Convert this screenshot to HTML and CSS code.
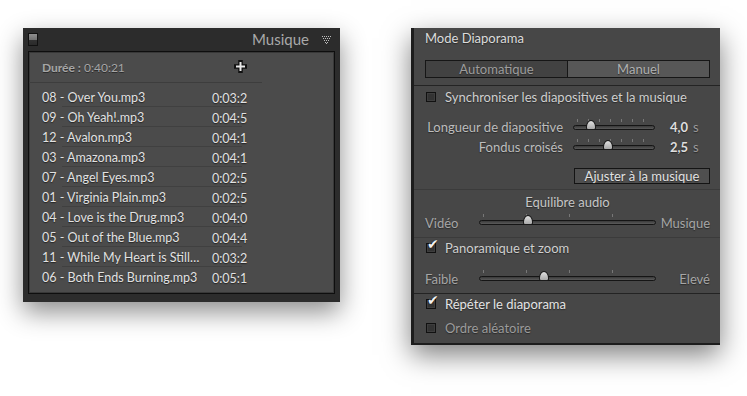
FILE: index.html
```html
<!DOCTYPE html>
<html lang="fr">
<head>
    <meta charset="UTF-8">
    <title>Musique / Diaporama</title>
    <link rel="stylesheet" href="styles.css">
</head>
<body>
    <div class="page">
        <section class="music">
            <header class="music-head">
                <span class="toggle"></span>
                <span class="music-title">Musique</span>
                <svg class="tri" width="9" height="8" viewBox="0 0 9 8">
                    <g fill="#bdbdbd">
                        <rect x="0" y="0" width="1" height="1"/><rect x="2" y="0" width="1" height="1"/><rect x="4" y="0" width="1" height="1"/><rect x="6" y="0" width="1" height="1"/><rect x="8" y="0" width="1" height="1"/>
                        <rect x="1" y="2" width="1" height="1"/><rect x="3" y="2" width="1" height="1"/><rect x="5" y="2" width="1" height="1"/><rect x="7" y="2" width="1" height="1"/>
                        <rect x="2" y="4" width="1" height="1"/><rect x="4" y="4" width="1" height="1"/><rect x="6" y="4" width="1" height="1"/>
                        <rect x="3" y="6" width="1" height="1"/><rect x="5" y="6" width="1" height="1"/>
                        <rect x="4" y="7" width="1" height="1"/>
                    </g>
                </svg>
            </header>
            <div class="music-box">
                <div class="duration">
                    <span><b>Durée :</b> 0:40:21</span>
                    <svg class="plus" width="13" height="13" viewBox="0 0 13 13">
                        <path d="M6.5 1.5V11.5M1.5 6.5H11.5" stroke="#111" stroke-width="4.5" stroke-linecap="square"/>
                        <path d="M6.5 2V11M2 6.5H11" stroke="#e8e8e8" stroke-width="2"/>
                    </svg>
                </div>
                <ul class="tracks">
                    <li><span class="name">08 - Over You.mp3</span><span class="time">0:03:2</span></li>
                    <li><span class="name">09 - Oh Yeah!.mp3</span><span class="time">0:04:5</span></li>
                    <li><span class="name">12 - Avalon.mp3</span><span class="time">0:04:1</span></li>
                    <li><span class="name">03 - Amazona.mp3</span><span class="time">0:04:1</span></li>
                    <li><span class="name">07 - Angel Eyes.mp3</span><span class="time">0:02:5</span></li>
                    <li><span class="name">01 - Virginia Plain.mp3</span><span class="time">0:02:5</span></li>
                    <li><span class="name">04 - Love is the Drug.mp3</span><span class="time">0:04:0</span></li>
                    <li><span class="name">05 - Out of the Blue.mp3</span><span class="time">0:04:4</span></li>
                    <li><span class="name">11 - While My Heart is Still…</span><span class="time">0:03:2</span></li>
                    <li><span class="name">06 - Both Ends Burning.mp3</span><span class="time">0:05:1</span></li>
                </ul>
            </div>
        </section>

        <section class="slideshow">
            <div class="block block-mode">
                <div class="title">Mode Diaporama</div>
                <div class="segments">
                    <span class="seg">Automatique</span>
                    <span class="seg seg-on">Manuel</span>
                </div>
            </div>

            <div class="block block-timing">
                <label class="check"><span class="box"></span>Synchroniser les diapositives et la musique</label>
                <div class="slider-row">
                    <span class="label">Longueur de diapositive</span>
                    <span class="track short"><span class="thumb" style="left: 17px"></span></span>
                    <span class="value">4,0</span><span class="unit">s</span>
                </div>
                <div class="slider-row">
                    <span class="label">Fondus croisés</span>
                    <span class="track short"><span class="thumb" style="left: 34px"></span></span>
                    <span class="value">2,5</span><span class="unit">s</span>
                </div>
                <div class="fit-row">
                    <span class="fit-button">Ajuster à la musique</span>
                </div>
            </div>

            <div class="block block-audio">
                <div class="center-label">Equilibre audio</div>
                <div class="range-row">
                    <span class="left">Vidéo</span>
                    <span class="track long"><span class="thumb" style="left: 48px"></span></span>
                    <span class="right">Musique</span>
                </div>
            </div>

            <div class="block block-pan">
                <label class="check checked"><span class="box"></span>Panoramique et zoom</label>
                <div class="range-row">
                    <span class="left">Faible</span>
                    <span class="track long"><span class="thumb" style="left: 64px"></span></span>
                    <span class="right">Elevé</span>
                </div>
            </div>

            <div class="block block-repeat">
                <label class="check checked bright"><span class="box"></span>Répéter le diaporama</label>
                <label class="check dim"><span class="box"></span>Ordre aléatoire</label>
            </div>
        </section>
    </div>
</body>
</html>
```

FILE: styles.css
```css
* {
    margin: 0;
    padding: 0;
    box-sizing: border-box;
}

body {
    min-height: 396px;
    background: #ffffff;
    font-family: 'Lato', 'Open Sans', sans-serif;
    font-size: 12.5px;
}

.page {
    min-height: 396px;
    display: flex;
    align-items: flex-start;
    gap: 71px;
    padding: 28px 0 0 23px;
}

/* Music panel */
.music {
    width: 317px;
    background: #2c2c2c;
    padding: 0 5px 8px;
    box-shadow: 0 10px 24px rgba(0, 0, 0, 0.45);
}

.music-head {
    height: 23px;
    display: flex;
    align-items: center;
}

.toggle {
    width: 10px;
    height: 13px;
    border: 1px solid #111;
    background: linear-gradient(#8f8f8f 0, #737373 50%, #333 50%, #2a2a2a 100%);
}

.music-title {
    margin-left: auto;
    font-size: 15px;
    color: #a9a9a9;
    margin-top: -1px;
}

.tri {
    margin: 0 4px 0 13px;
}

.music-box {
    height: 243px;
    background: #4b4b4b;
    border: 1px solid #0e0e0e;
    box-shadow: inset 0 0 0 1px #383838;
}

.duration {
    width: 233px;
    height: 31px;
    display: flex;
    align-items: center;
    justify-content: space-between;
    padding: 0 15px 0 13px;
    border-bottom: 1px solid #3d3d3d;
    font-size: 12px;
    color: #a6a6a6;
    text-shadow: 0 1px 0 #2c2c2c;
}

.duration b {
    font-weight: bold;
}

.plus {
    margin-top: -2px;
}

.tracks {
    list-style: none;
    padding-top: 4px;
}

.tracks li {
    height: 20px;
    display: flex;
    align-items: center;
    padding-left: 13px;
    color: #e2e2e2;
    text-shadow: 0 1px 1px #262626;
    background: linear-gradient(#404040, #404040) no-repeat 33px 100% / 180px 1px;
}

.tracks li:last-child {
    background: none;
}

.name {
    width: 170px;
    white-space: nowrap;
}

.time {
    padding-top: 3px;
}

/* Slideshow panel */
.slideshow {
    width: 309px;
    font-size: 13px;
    background: #474747;
    border-left: 3px solid #1d1d1d;
    border-bottom: 2px solid #1d1d1d;
    box-shadow: 0 10px 26px rgba(0, 0, 0, 0.5);
    color: #cfcfcf;
    text-shadow: 0 1px 1px #2a2a2a;
}

.block {
    padding: 0 10px 0 11px;
}

.block-mode {
    padding-bottom: 7px;
    border-bottom: 1px solid #242424;
}

.title {
    height: 20px;
    line-height: 20px;
    color: #dcdcdc;
}

.segments {
    display: flex;
    margin-top: 12px;
    height: 18px;
    border: 1px solid #161616;
}

.seg {
    flex: 1 1 0;
    text-align: center;
    line-height: 16px;
    color: #9d9d9d;
    background: #424242;
}

.seg-on {
    background: #575757;
    border-left: 1px solid #161616;
    color: #b0b0b0;
}

.block-timing {
    padding-top: 1px;
    padding-bottom: 5px;
    border-bottom: 1px solid #3b3b3b;
}

.check {
    height: 20px;
    display: flex;
    align-items: center;
    gap: 9px;
    color: #cfcfcf;
}

.box {
    width: 10px;
    height: 10px;
    margin-left: 1px;
    border: 1px solid #111;
    background: #333;
    box-shadow: inset 0 0 0 1px #3e3e3e;
    position: relative;
}

.checked .box::after {
    content: '\2714';
    position: absolute;
    left: 0;
    top: -8px;
    font-family: 'DejaVu Sans', sans-serif;
    font-size: 14px;
    color: #f2f2f2;
    text-shadow: 0 0 1px #000;
}

.slider-row {
    height: 20px;
    display: flex;
    align-items: center;
}

.block-timing .check + .slider-row {
    margin-top: 10px;
}

.label {
    width: 138px;
    margin-right: 10px;
    text-align: right;
    white-space: nowrap;
    color: #bdbdbd;
}

.track {
    position: relative;
    height: 5px;
    border: 1px solid #151515;
    border-radius: 3px;
    background: linear-gradient(#3a3a3a, #5a5a5a);
}

.track::before {
    content: '';
    position: absolute;
    left: 3px;
    right: 3px;
    top: -7px;
    height: 3px;
    background: repeating-linear-gradient(90deg, #777 0 1px, transparent 1px 11px);
}

.track.short {
    width: 82px;
}

.track.long {
    width: 177px;
}

.track.long::before {
    background: repeating-linear-gradient(90deg, #777 0 1px, transparent 1px 43px);
}

.thumb {
    position: absolute;
    top: -6px;
    width: 10px;
    height: 10px;
    margin-left: -5px;
    background: linear-gradient(#e0e0e0, #a9a9a9);
    border: 1px solid #1a1a1a;
    border-radius: 50% 50% 2px 2px / 70% 70% 2px 2px;
}

.value {
    width: 33px;
    text-align: right;
    font-weight: bold;
    color: #dedede;
}

.unit {
    margin-left: 5px;
    color: #9a9a9a;
}

.fit-row {
    display: flex;
    justify-content: flex-end;
    margin-top: 11px;
}

.fit-button {
    width: 136px;
    height: 16px;
    line-height: 14px;
    text-align: center;
    background: #4f4f4f;
    border: 1px solid #141414;
    color: #e2e2e2;
}

.block-audio {
    padding-top: 2px;
    padding-bottom: 4px;
    border-bottom: 1px solid #3b3b3b;
}

.center-label {
    height: 20px;
    line-height: 20px;
    text-align: center;
    color: #c6c6c6;
}

.range-row {
    height: 21px;
    display: flex;
    align-items: center;
    color: #a6a6a6;
}

.range-row .left {
    width: 54px;
}

.range-row .right {
    flex: 1;
    text-align: right;
}

.block-pan {
    padding-bottom: 4px;
    border-bottom: 1px solid #232323;
}

.block-pan .check {
    height: 19px;
}

.block-pan .range-row {
    margin-top: 11px;
}

.block-repeat {
    padding-bottom: 5px;
}

.block-repeat .check + .check {
    margin-top: 4px;
}

.check.bright {
    color: #e4e4e4;
}

.check.dim {
    color: #9c9c9c;
}
```
